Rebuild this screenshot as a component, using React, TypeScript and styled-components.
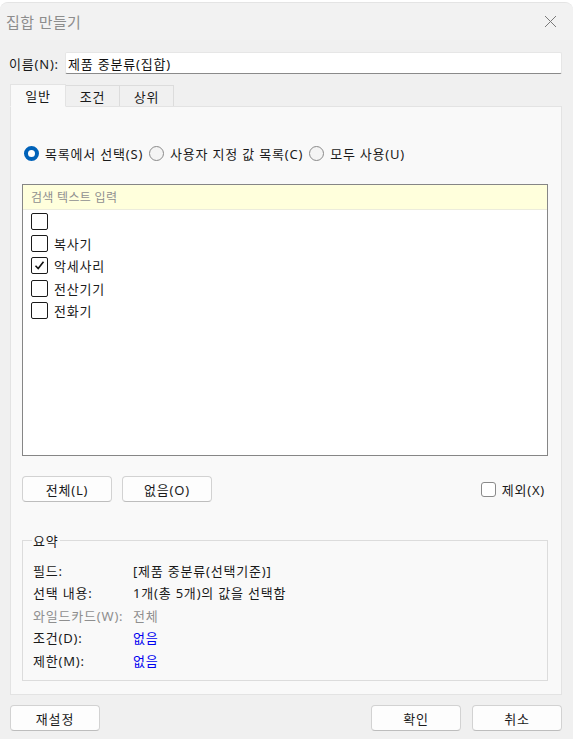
import React from 'react'
import styled, { createGlobalStyle } from 'styled-components'

const GlobalStyle = createGlobalStyle`
  html, body {
    margin: 0;
    padding: 0;
    background: #ffffff;
  }
  body {
    font-family: 'Noto Sans', 'Noto Sans CJK KR', sans-serif;
    font-size: 13px;
    letter-spacing: 0.8px;
    color: #1a1a1a;
  }
  * { box-sizing: border-box; }
`

const Window = styled.div`
  width: 573px;
  height: 737px;
  margin-top: 2px;
  background: #f0f0f0;
  border-radius: 8px 8px 0 0;
  border-top: 1px solid #e4e4e4;
  display: flex;
  flex-direction: column;
  overflow: hidden;
`

const TitleBar = styled.div`
  height: 37px;
  display: flex;
  align-items: center;
  justify-content: space-between;
  padding: 0 8px 0 6px;
  background: #f2f2f2;
`

const Title = styled.span`
  font-size: 15px;
  color: #8d8d8d;
  letter-spacing: 0.4px;
`

const CloseButton = styled.button`
  width: 30px;
  height: 30px;
  border: 0;
  background: transparent;
  display: flex;
  align-items: center;
  justify-content: center;
  padding: 0;
`

const Body = styled.div`
  flex: 1;
  display: flex;
  flex-direction: column;
  padding: 12px 11px 0 10px;
`

const NameRow = styled.div`
  display: flex;
  align-items: center;
  gap: 6px;
  height: 22px;
`

const NameLabel = styled.label`
  width: 50px;
  margin-left: -1px;
  white-space: nowrap;
`

const NameInput = styled.div`
  flex: 1;
  height: 22px;
  background: #ffffff;
  border: 1px solid #e6e6e6;
  border-bottom: 1px solid #8a8a8a;
  border-radius: 2px;
  display: flex;
  align-items: center;
  padding-left: 2px;
  color: #111;
`

const TabStrip = styled.div`
  display: flex;
  align-items: flex-end;
  margin-top: 9px;
  height: 23px;
  position: relative;
  z-index: 1;
`

const Tab = styled.div<{ $active?: boolean }>`
  width: ${p => (p.$active ? 56 : 54)}px;
  height: ${p => (p.$active ? 23 : 21)}px;
  display: flex;
  align-items: center;
  justify-content: center;
  background: ${p => (p.$active ? '#f9f9f9' : '#f0f0f0')};
  border: 1px solid ${p => (p.$active ? '#e3e3e3' : '#dcdcdc')};
  border-bottom: ${p => (p.$active ? '1px solid #f9f9f9' : '0')};
  border-left: ${p => (p.$active ? '1px solid #e3e3e3' : '0')};
  color: #1a1a1a;
  margin-bottom: ${p => (p.$active ? -1 : 0)}px;
`

const Panel = styled.div`
  height: 589px;
  background: #f9f9f9;
  border: 1px solid #e3e3e3;
  display: flex;
  flex-direction: column;
  padding: 38px 13px 0 11px;
`

const RadioRow = styled.div`
  display: flex;
  align-items: center;
  height: 16px;
  padding-left: 2px;
`

const RadioItem = styled.label`
  display: flex;
  align-items: center;
  gap: 6px;
  margin-right: 6px;
  white-space: nowrap;
`

const RadioDot = styled.span<{ $checked?: boolean }>`
  width: 15px;
  height: 15px;
  border-radius: 50%;
  flex-shrink: 0;
  ${p =>
    p.$checked
      ? `background: #ffffff; border: 4.5px solid #0062b9;`
      : `background: #f4f4f4; border: 1px solid #8a8a8a;`}
`

const ListBox = styled.div`
  margin-top: 23px;
  height: 272px;
  background: #ffffff;
  border: 1px solid #868686;
  display: flex;
  flex-direction: column;
`

const SearchBar = styled.div`
  height: 25px;
  background: #ffffdc;
  border-bottom: 1px solid #ececdc;
  color: #8f8f8f;
  font-size: 12px;
  letter-spacing: 0.3px;
  display: flex;
  align-items: center;
  padding-left: 8px;
`

const Items = styled.div`
  display: flex;
  flex-direction: column;
  padding: 0 0 0 8px;
`

const ItemRow = styled.div`
  display: flex;
  align-items: center;
  gap: 6px;
  height: 22.3px;
`

const Box = styled.span<{ $soft?: boolean }>`
  width: ${p => (p.$soft ? 15 : 17)}px;
  height: ${p => (p.$soft ? 15 : 17)}px;
  border: 1px solid ${p => (p.$soft ? '#8a8a8a' : '#1a1a1a')};
  border-radius: ${p => (p.$soft ? 3 : 2)}px;
  background: #ffffff;
  display: flex;
  align-items: center;
  justify-content: center;
  flex-shrink: 0;
`

const ButtonRow = styled.div`
  display: flex;
  align-items: center;
  gap: 10px;
  margin-top: 20px;
  height: 26px;
`

const Button = styled.button`
  width: 90px;
  height: 26px;
  background: #fdfdfd;
  border: 1px solid #d2d2d2;
  border-bottom-color: #bdbdbd;
  border-radius: 4px;
  font: inherit;
  letter-spacing: inherit;
  color: #1a1a1a;
  padding: 0;
`

const ExcludeCheck = styled.label`
  margin-left: auto;
  display: flex;
  align-items: center;
  gap: 6px;
  margin-right: 3px;
`

const GroupBox = styled.fieldset`
  margin: 29px 0 0 0;
  height: 150px;
  border: 1px solid #dcdcdc;
  padding: 9px 0 0 10px;
  display: grid;
  grid-template-columns: 100px 1fr;
  grid-auto-rows: 22.5px;
  align-items: center;
`

const Legend = styled.legend`
  padding: 0 1px;
  margin-left: -1px;
  color: #1a1a1a;
`

const Cell = styled.span<{ $tone?: 'muted' | 'link' }>`
  white-space: nowrap;
  color: ${p => (p.$tone === 'muted' ? '#8f8f8f' : p.$tone === 'link' ? '#0000f0' : '#1a1a1a')};
`

const Footer = styled.div`
  display: flex;
  align-items: center;
  gap: 11px;
  height: 26px;
  margin-top: 10px;
`

const Spacer = styled.div`
  flex: 1;
`

const items = [
  { label: '', checked: false },
  { label: '복사기', checked: false },
  { label: '악세사리', checked: true },
  { label: '전산기기', checked: false },
  { label: '전화기', checked: false },
]

const summary: { label: string; value: string; labelTone?: 'muted'; valueTone?: 'muted' | 'link' }[] = [
  { label: '필드:', value: '[제품 중분류(선택기준)]' },
  { label: '선택 내용:', value: '1개(총 5개)의 값을 선택함' },
  { label: '와일드카드(W):', value: '전체', labelTone: 'muted', valueTone: 'muted' },
  { label: '조건(D):', value: '없음', valueTone: 'link' },
  { label: '제한(M):', value: '없음', valueTone: 'link' },
]

const Check = () => (
  <svg width="11" height="11" viewBox="0 0 11 11">
    <path d="M1.5 5.8 L4.2 8.5 L9.5 1.8" fill="none" stroke="#111" strokeWidth="1.6" />
  </svg>
)

export default function App() {
  return (
    <>
      <GlobalStyle />
      <Window>
        <TitleBar>
          <Title>집합 만들기</Title>
          <CloseButton aria-label="닫기">
            <svg width="13" height="13" viewBox="0 0 13 13">
              <path d="M1 1 L12 12 M12 1 L1 12" stroke="#7a7a7a" strokeWidth="1" />
            </svg>
          </CloseButton>
        </TitleBar>
        <Body>
          <NameRow>
            <NameLabel>이름(N):</NameLabel>
            <NameInput>제품 중분류(집합)</NameInput>
          </NameRow>
          <TabStrip>
            <Tab $active>일반</Tab>
            <Tab>조건</Tab>
            <Tab>상위</Tab>
          </TabStrip>
          <Panel>
            <RadioRow>
              <RadioItem>
                <RadioDot $checked />
                목록에서 선택(S)
              </RadioItem>
              <RadioItem>
                <RadioDot />
                사용자 지정 값 목록(C)
              </RadioItem>
              <RadioItem>
                <RadioDot />
                모두 사용(U)
              </RadioItem>
            </RadioRow>
            <ListBox>
              <SearchBar>검색 텍스트 입력</SearchBar>
              <Items>
                {items.map((it, i) => (
                  <ItemRow key={i}>
                    <Box>{it.checked && <Check />}</Box>
                    <span>{it.label}</span>
                  </ItemRow>
                ))}
              </Items>
            </ListBox>
            <ButtonRow>
              <Button>전체(L)</Button>
              <Button>없음(O)</Button>
              <ExcludeCheck>
                <Box $soft />
                제외(X)
              </ExcludeCheck>
            </ButtonRow>
            <GroupBox>
              <Legend>요약</Legend>
              {summary.map(row => (
                <React.Fragment key={row.label}>
                  <Cell $tone={row.labelTone}>{row.label}</Cell>
                  <Cell $tone={row.valueTone}>{row.value}</Cell>
                </React.Fragment>
              ))}
            </GroupBox>
          </Panel>
          <Footer>
            <Button>재설정</Button>
            <Spacer />
            <Button>확인</Button>
            <Button>취소</Button>
          </Footer>
        </Body>
      </Window>
    </>
  )
}
